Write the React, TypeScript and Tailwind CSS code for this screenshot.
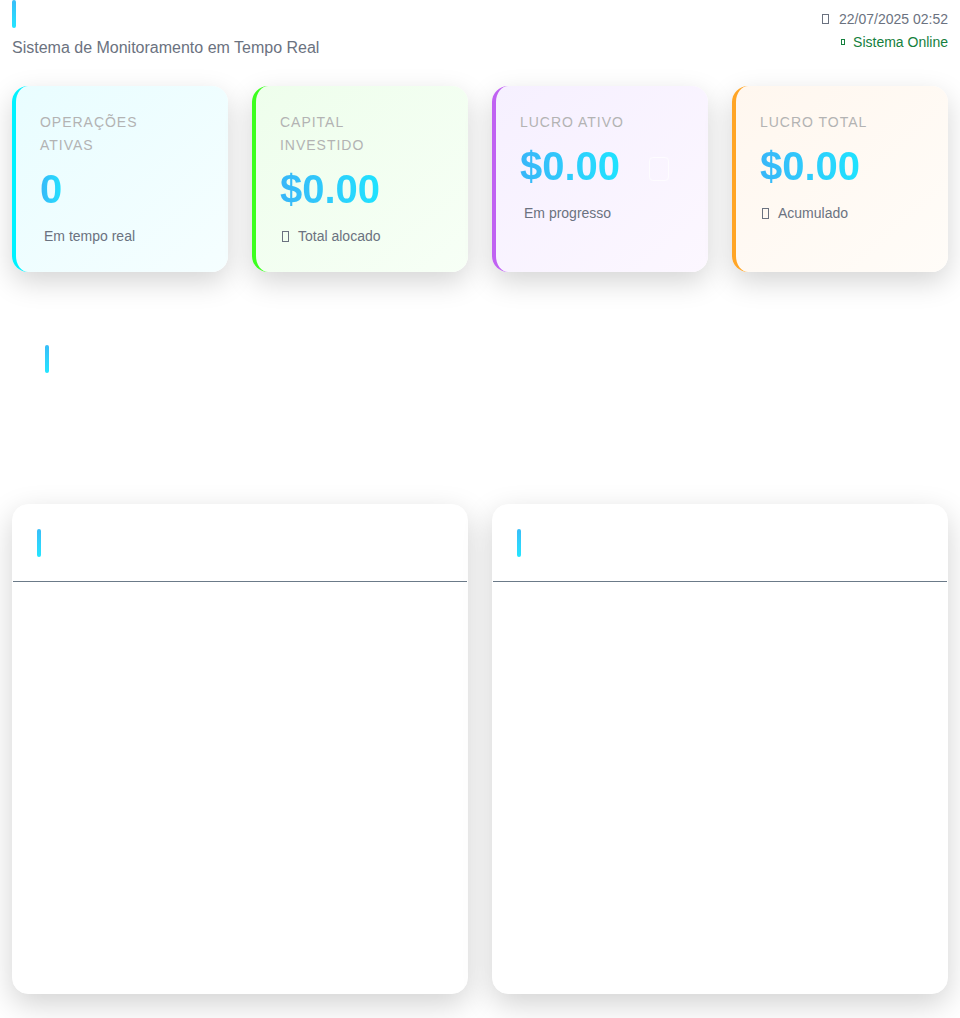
import React from 'react';

interface Stat {
  label: string;
  value: string;
  sub: string;
  glyph?: boolean;
  accent: string;
  bg: string;
  extra?: boolean;
}

const stats: Stat[] = [
  {
    label: 'Operações Ativas',
    value: '0',
    sub: 'Em tempo real',
    accent: 'border-l-[#00f2ff]',
    bg: 'bg-gradient-to-br from-[#e9fdff] to-[#f5feff]',
  },
  {
    label: 'Capital Investido',
    value: '$0.00',
    sub: 'Total alocado',
    glyph: true,
    accent: 'border-l-[#3cff1e]',
    bg: 'bg-gradient-to-br from-[#eefeec] to-[#f7fff6]',
  },
  {
    label: 'Lucro Ativo',
    value: '$0.00',
    sub: 'Em progresso',
    accent: 'border-l-[#c062f2]',
    bg: 'bg-gradient-to-br from-[#f6f0ff] to-[#fcf7ff]',
    extra: true,
  },
  {
    label: 'Lucro Total',
    value: '$0.00',
    sub: 'Acumulado',
    glyph: true,
    accent: 'border-l-[#ffa526]',
    bg: 'bg-gradient-to-br from-[#fff7ef] to-[#fffcf8]',
  },
];

// empty-glyph box, as the icon font is missing
const Tofu = ({ className }: { className: string }) => (
  <span className={`inline-block border ${className}`} />
);

const AccentBar = () => (
  <div className="w-1 h-7 rounded-full bg-gradient-to-b from-[#38bdf8] to-[#22e5ff]" />
);

const StatCard = ({ stat }: { stat: Stat }) => (
  <div
    className={`relative h-[186px] rounded-2xl border-l-4 ${stat.accent} ${stat.bg} pl-6 pr-6 pt-6 shadow-[0_10px_28px_rgba(0,0,0,0.17)]`}
  >
    <div className="max-w-[130px] text-sm leading-[23px] uppercase tracking-[0.07em] text-[#b3b3b3] pt-px">
      {stat.label}
    </div>
    <div className="mt-2 text-[40px] leading-[49px] font-bold bg-gradient-to-r from-[#38b6f8] to-[#1ee3ff] bg-clip-text text-transparent w-fit">
      {stat.value}
    </div>
    {stat.extra && (
      <div className="absolute left-[153px] top-[71px] w-5 h-6 border border-white/70 rounded-sm" />
    )}
    <div className="mt-3 flex items-center text-sm leading-5 text-[#6b7280]">
      {stat.glyph ? (
        <>
          <Tofu className="ml-[2px] w-[7px] h-[11px] border-[#6b7280]" />
          <span className="ml-[9px]">{stat.sub}</span>
        </>
      ) : (
        <span className="ml-1">{stat.sub}</span>
      )}
    </div>
  </div>
);

const PanelCard = () => (
  <div className="h-[490px] rounded-2xl border border-white bg-white shadow-[0_10px_30px_rgba(0,0,0,0.18)] overflow-hidden">
    <div className="px-6 pt-6 pb-6 border-b border-[#6b7a88]">
      <AccentBar />
    </div>
  </div>
);

export default function App() {
  return (
    <div className="min-h-[1018px] bg-white px-3 font-['Liberation_Sans',Arial,sans-serif]">
      <header className="flex justify-between items-start">
        <div>
          <AccentBar />
          <p className="mt-2 text-base leading-6 text-[#6b7280]">Sistema de Monitoramento em Tempo Real</p>
        </div>
        <div className="flex flex-col items-end text-sm leading-5">
          <div className="mt-[9px] flex items-center text-[#6b7280]">
            <Tofu className="w-[7px] h-[10px] border-[#6b7280]" />
            <span className="ml-[10px]">22/07/2025 02:52</span>
          </div>
          <div className="mt-[3px] flex items-center text-[#15803d]">
            <Tofu className="w-[4px] h-[6px] border-[#15803d]" />
            <span className="ml-[8px]">Sistema Online</span>
          </div>
        </div>
      </header>

      <section className="mt-[26px] grid grid-cols-4 gap-6">
        {stats.map((s) => (
          <StatCard key={s.label} stat={s} />
        ))}
      </section>

      <section className="mt-6 h-[184px] px-[33px] pt-[49px]">
        <AccentBar />
      </section>

      <section className="mt-6 grid grid-cols-2 gap-6">
        <PanelCard />
        <PanelCard />
      </section>
    </div>
  );
}
